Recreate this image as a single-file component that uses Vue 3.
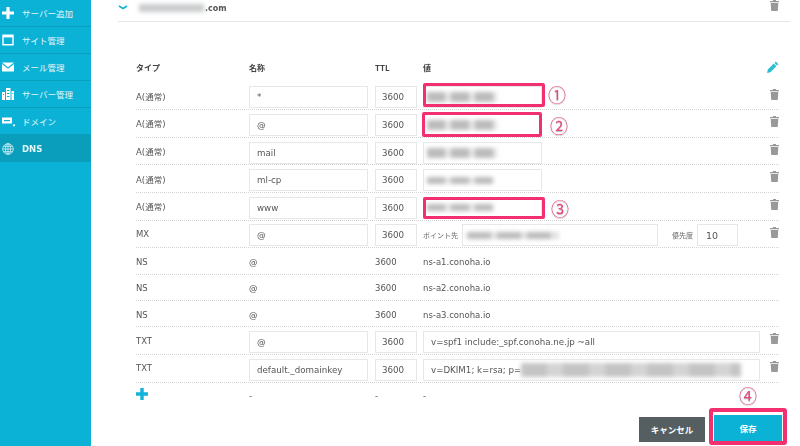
<script setup>
const rows = [
  { type: 'A(通常)', name: '*', smear: 'a', mark: 'one', num: '①' },
  { type: 'A(通常)', name: '@', smear: 'a', mark: 'two', num: '②' },
  { type: 'A(通常)', name: 'mail', smear: 'a' },
  { type: 'A(通常)', name: 'ml-cp', smear: 'b' },
  { type: 'A(通常)', name: 'www', smear: 'b', mark: 'three', num: '③' },
]
const ns = ['ns-a1.conoha.io', 'ns-a2.conoha.io', 'ns-a3.conoha.io']
const side = [
  { key: 'plus', label: 'サーバー追加' },
  { key: 'site', label: 'サイト管理' },
  { key: 'mail', label: 'メール管理' },
  { key: 'server', label: 'サーバー管理' },
  { key: 'domain', label: 'ドメイン' },
  { key: 'dns', label: 'DNS' },
]
</script>

<template>
  <div class="page">
    <aside class="side">
      <div v-for="s in side" :key="s.key" class="nav" :class="{ active: s.key === 'dns' }">
        <span class="ico">
          <svg v-if="s.key === 'plus'" viewBox="0 0 12 12" width="12" height="12"><path d="M4.400 0h3.200v4.400H12v3.200H7.600V12H4.400V7.600H0V4.400h4.400z" fill="#fff"/></svg>
          <svg v-else-if="s.key === 'site'" viewBox="0 0 12 12" width="12" height="12"><path d="M1 1.200h10v9.600H1z" fill="none" stroke="#fff" stroke-width="1.400"/><path d="M1 1.200h10v2.200H1z" fill="#fff"/></svg>
          <svg v-else-if="s.key === 'mail'" viewBox="0 0 12 10" width="12" height="10"><path d="M0 .5h12L6 5.200z" fill="#fff"/><path d="M0 2v7.500h12V2L6 6.800z" fill="#fff"/></svg>
          <svg v-else-if="s.key === 'server'" viewBox="0 0 12 12" width="12" height="12"><path d="M4 0h4.500v12H4zM0 4h3v8H0zM9.500 3H12v9H9.500z" fill="#fff"/><path d="M5 2h2.500v1H5zM5 5h2.500v1H5zM5 8h2.500v1H5zM1 6h1v1H1zM10.300 5h1v1h-1z" fill="#0bb2d6"/></svg>
          <svg v-else-if="s.key === 'domain'" viewBox="0 0 14 11" width="14" height="11"><path d="M0 1.500h10v6H0z" fill="#fff"/><path d="M2 4h6v1.200H2z" fill="#0bb2d6"/><circle cx="12" cy="9.300" r="1.100" fill="#fff"/></svg>
          <svg v-else viewBox="0 0 12 12" width="12" height="12" fill="none" stroke="#d6f2f8" stroke-width=".8"><circle cx="6" cy="6" r="5.300"/><ellipse cx="6" cy="6" rx="2.500" ry="5.300"/><path d="M6 .7v10.600M.7 6h10.600M1.500 3.300h9M1.500 8.700h9"/></svg>
        </span>
        <span class="lbl">{{ s.label }}</span>
      </div>
    </aside>

    <main class="main">
      <header class="domain">
        <svg class="chev" viewBox="0 0 10 5" width="10" height="5"><path d="M1 1l4 2.500L9 1" fill="none" stroke="#12b3d6" stroke-width="1.700"/></svg>
        <span class="smear dom"></span>
        <span class="com">.com</span>
        <svg class="trash top" viewBox="0 0 10 12" width="9" height="11"><path d="M3.500 0h3l.4 1H10v1.500H0V1h3.100zM.8 3.300h8.400L8.600 12H1.400z" fill="#999"/></svg>
      </header>

      <section class="table">
        <div class="row head">
          <span>タイプ</span><span>名称</span><span>TTL</span><span>値</span>
          <svg class="pencil" viewBox="0 0 12 12" width="12" height="12"><path d="M8.800.6l2.600 2.600-1.300 1.300-2.600-2.600zM6.800 2.600l2.600 2.600-6 6-3.300.7.700-3.300z" fill="#2bbfd0"/></svg>
        </div>

        <div v-for="r in rows" :key="r.name" class="row">
          <span class="kind">{{ r.type }}</span>
          <div class="input">{{ r.name }}</div>
          <div class="input">3600</div>
          <div class="value">
            <div class="input narrow"><span class="smear" :class="r.smear"></span></div>
            <template v-if="r.mark">
              <i class="mark" :class="r.mark"></i>
              <b class="num" :class="r.mark">{{ r.num }}</b>
            </template>
          </div>
          <svg class="trash" viewBox="0 0 10 12" width="9" height="11"><path d="M3.500 0h3l.4 1H10v1.500H0V1h3.100zM.8 3.300h8.400L8.600 12H1.400z" fill="#999"/></svg>
        </div>

        <div class="row">
          <span class="kind">MX</span>
          <div class="input">@</div>
          <div class="input">3600</div>
          <div class="value mx">
            <small>ポイント先</small>
            <div class="input point"><span class="smear c"></span></div>
            <small class="pri">優先度</small>
            <div class="input prio">10</div>
          </div>
          <svg class="trash" viewBox="0 0 10 12" width="9" height="11"><path d="M3.500 0h3l.4 1H10v1.500H0V1h3.100zM.8 3.300h8.400L8.600 12H1.400z" fill="#999"/></svg>
        </div>

        <div v-for="n in ns" :key="n" class="row plain">
          <span>NS</span><span>@</span><span>3600</span><span>{{ n }}</span>
        </div>

        <div class="row">
          <span class="kind">TXT</span>
          <div class="input">@</div>
          <div class="input">3600</div>
          <div class="input wide">v=spf1 include:_spf.conoha.ne.jp ~all</div>
          <svg class="trash" viewBox="0 0 10 12" width="9" height="11"><path d="M3.500 0h3l.4 1H10v1.500H0V1h3.100zM.8 3.300h8.400L8.600 12H1.400z" fill="#999"/></svg>
        </div>

        <div class="row">
          <span class="kind">TXT</span>
          <div class="input">default._domainkey</div>
          <div class="input">3600</div>
          <div class="input wide">v=DKIM1; k=rsa; p=<span class="smear d"></span></div>
          <svg class="trash" viewBox="0 0 10 12" width="9" height="11"><path d="M3.500 0h3l.4 1H10v1.500H0V1h3.100zM.8 3.300h8.400L8.600 12H1.400z" fill="#999"/></svg>
        </div>

        <div class="row add">
          <svg viewBox="0 0 12 12" width="12" height="12"><path d="M4.300 0h3.400v4.300H12v3.400H7.700V12H4.300V7.700H0V4.300h4.300z" fill="#12b3d6"/></svg>
          <span>-</span><span>-</span><span>-</span>
        </div>
      </section>

      <footer class="actions">
        <b class="num four">④</b>
        <button class="btn cancel">キャンセル</button>
        <div class="savewrap"><button class="btn save">保存</button></div>
      </footer>
    </main>
  </div>
</template>

<style>
html, body { margin: 0; background: #fff; overflow: hidden; }
</style>

<style scoped>
.page {
  display: flex;
  width: 800px;
  height: 446px;
  overflow: hidden;
  font-family: "DejaVu Sans", "Noto Sans CJK JP", sans-serif;
  font-size: 8.5px;
  color: #555;
  filter: blur(.35px);
}
.side { width: 91px; flex: none; background: #0bb2d6; }
.nav {
  height: 27px;
  box-sizing: border-box;
  border-bottom: 1px solid #0a9fbf;
  display: flex;
  align-items: center;
  padding-left: 2px;
  color: #e4f7fb;
  font-family: "Noto Sans CJK JP", sans-serif;
  font-size: 8.5px;
}
.nav.active { background: #0a9dbc; border-bottom: 0; font-family: "DejaVu Sans", sans-serif; font-weight: 700; }
.ico { width: 20px; display: flex; align-items: center; }
.main { flex: 1; padding-left: 27px; min-width: 0; }
.domain {
  height: 21px;
  width: 672px;
  border-bottom: 1px solid #e4e6e6;
  display: flex;
  align-items: center;
  position: relative;
}
.chev { margin: -6px 0 0 0; }
.com { font-weight: 700; font-size: 8px; color: #555; margin-top: -5px; }
.smear { display: inline-block; filter: blur(2.2px); background: #bbb; }
.dom { width: 65px; height: 8px; margin: -5px 1px 0 11px; background: #c9cbcd; }
.trash.top { position: absolute; left: 652px; top: 0; }
.table { margin: 33px 0 0 18px; width: 643px; }
.row {
  display: grid;
  grid-template-columns: 113px 126px 48px 1fr;
  align-items: center;
  position: relative;
  height: 27.6px;
  padding-top: 3px;
  box-sizing: border-box;
  border-bottom: 1px dotted #d4d4d4;
}
.kind { margin-bottom: 3px; }
.head {
  font-family: "Noto Sans CJK JP", sans-serif;
  font-weight: 700;
  color: #444;
  border-bottom: 0;
  font-size: 8px;
  padding: 0 0 3px;
}
.plain { height: 26.4px; padding-top: 2px; }
.add { border-bottom: 0; }
.add svg { margin-bottom: 7px; }
.add span { margin-bottom: 3px; }
.pencil { position: absolute; right: 0; top: 6px; }
.input {
  box-sizing: border-box;
  height: 22px;
  border: 1px solid #e6e8e8;
  background: #fff;
  display: flex;
  align-items: center;
  padding-left: 7px;
  font-size: 8.7px;
  white-space: nowrap;
  overflow: hidden;
}
.row > .input:nth-child(2) { width: 119px; }
.row > .input:nth-child(3) { width: 42px; padding-left: 6px; }
.value { position: relative; display: flex; align-items: center; }
.narrow { width: 119px; padding-left: 3px; }
.wide { width: 337px; }
.a, .b { height: 10px; background: repeating-linear-gradient(90deg, #bbb 0 18px, #e4e4e4 18px 24px); }
.a { width: 70px; }
.b { width: 66px; height: 7px; }
.c { width: 91px; height: 7px; background: repeating-linear-gradient(90deg, #bbb 0 24px, #e4e4e4 24px 30px); }
.d { width: 220px; height: 14px; margin-left: 0; background: repeating-linear-gradient(90deg, #c4c4c4 0 26px, #d4d4d4 26px 42px); }
.mx small { font-size: 7px; color: #666; width: 39px; font-family: "Noto Sans CJK JP", sans-serif; }
.point { width: 196px; padding-left: 4px; }
.mx .pri { margin-left: 14px; width: 25px; }
.prio { width: 41px; padding-left: 8px; font-size: 9.5px; }
.row > .trash { position: absolute; right: 0; top: 6px; }
.mark {
  position: absolute;
  border: 3px solid #f2306f;
  border-radius: 2px;
  box-sizing: border-box;
}
.mark.one { left: 0; top: -3px; width: 122px; height: 24px; }
.mark.two { left: -1px; top: -2px; width: 120px; height: 25px; }
.mark.three { left: 0; top: 0; width: 122px; height: 22px; }
.num {
  position: absolute;
  font-family: "Noto Sans CJK JP", sans-serif;
  font-weight: 400;
  font-size: 18px;
  line-height: 20px;
  color: #e8457f;
  text-shadow: 0 1px 1px #bbb;
}
.num.one { left: 125px; top: -2px; }
.num.two { left: 127px; top: 1px; }
.num.three { left: 128px; top: 1px; }
.actions { position: relative; display: flex; align-items: flex-start; margin-top: -2px; padding-left: 521px; }
.num.four { left: 621px; top: -23px; }
.btn {
  height: 25px;
  border: 0;
  padding: 0;
  color: #fff;
  font-family: "Noto Sans CJK JP", sans-serif;
  font-size: 8.5px;
  font-weight: 700;
}
.cancel { width: 66px; background: #555f61; margin-top: 8.6px; }
.savewrap {
  margin-left: 4px;
  border: 4px solid #f2306f;
  border-radius: 3px;
  padding: 3px 1px 0;
  background: #fff;
  display: flex;
}
.save { width: 68px; height: 26px; background: #0bb2d6; }
</style>
